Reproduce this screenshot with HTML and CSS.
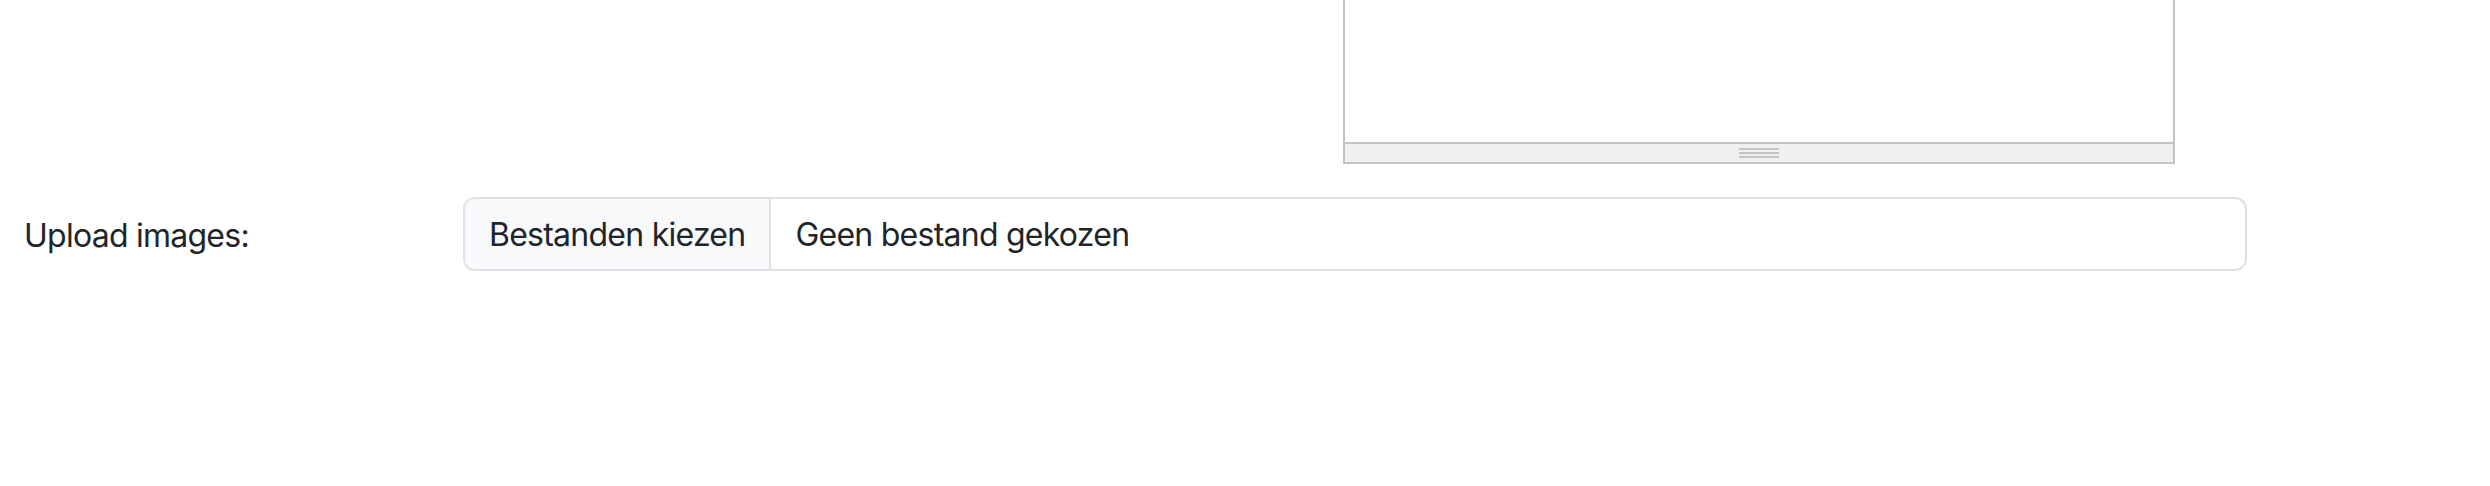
FILE: index.html
```html
<!DOCTYPE html>
<html lang="nl">
<head>
  <meta charset="UTF-8">
  <meta name="viewport" content="width=device-width, initial-scale=1.0">
  <title>Upload</title>
  <link rel="stylesheet" href="styles.css">
</head>
<body>
  <div class="form-row editor-row">
    <div></div>
    <div class="editor">
      <div class="editor-body"></div>
      <div class="statusbar">
        <div class="grip">
          <span></span><span></span><span></span>
        </div>
      </div>
    </div>
  </div>

  <div class="form-row upload-row">
    <label class="form-label" for="images">Upload images:</label>
    <div class="file-input">
      <span class="file-btn">Bestanden kiezen</span>
      <span class="file-name">Geen bestand gekozen</span>
    </div>
  </div>
</body>
</html>
```

FILE: styles.css
```css
body {
  font-family: Inter, "Noto Sans", sans-serif;
  margin: 0;
  padding: 0;
  background-color: #fff;
  color: #212529;
  letter-spacing: -0.75px;
}
.form-row {
  display: grid;
  grid-template-columns: 439px 1784px;
  padding-left: 24px;
}
.editor {
  width: 828px;
  margin-left: 880px;
  margin-top: -2px;
  border: 2px solid #c4c4c4;
  background-color: #fff;
}
.editor-body {
  height: 142px;
}
.statusbar {
  height: 20px;
  border-top: 2px solid #c4c4c4;
  background-color: #f0f0f0;
  border-radius: 0 0 4px 4px;
  display: flex;
  justify-content: center;
  padding-top: 4px;
  box-sizing: border-box;
}
.grip {
  display: flex;
  flex-direction: column;
  gap: 2px;
  width: 40px;
}
.grip span {
  display: block;
  height: 2px;
  background-color: #c4c4c4;
}
.upload-row {
  margin-top: 33px;
  align-items: center;
}
.form-label {
  font-size: 32px;
  line-height: 46px;
  padding-top: 3px;
}
.file-input {
  display: flex;
  border: 2px solid #dee2e6;
  border-radius: 12px;
  overflow: hidden;
  font-size: 32px;
  line-height: 46px;
}
.file-btn {
  padding: 13px 24px 11px;
  background-color: #f8f9fa;
  border-right: 2px solid #dee2e6;
}
.file-name {
  padding: 13px 24px 11px;
}
```
